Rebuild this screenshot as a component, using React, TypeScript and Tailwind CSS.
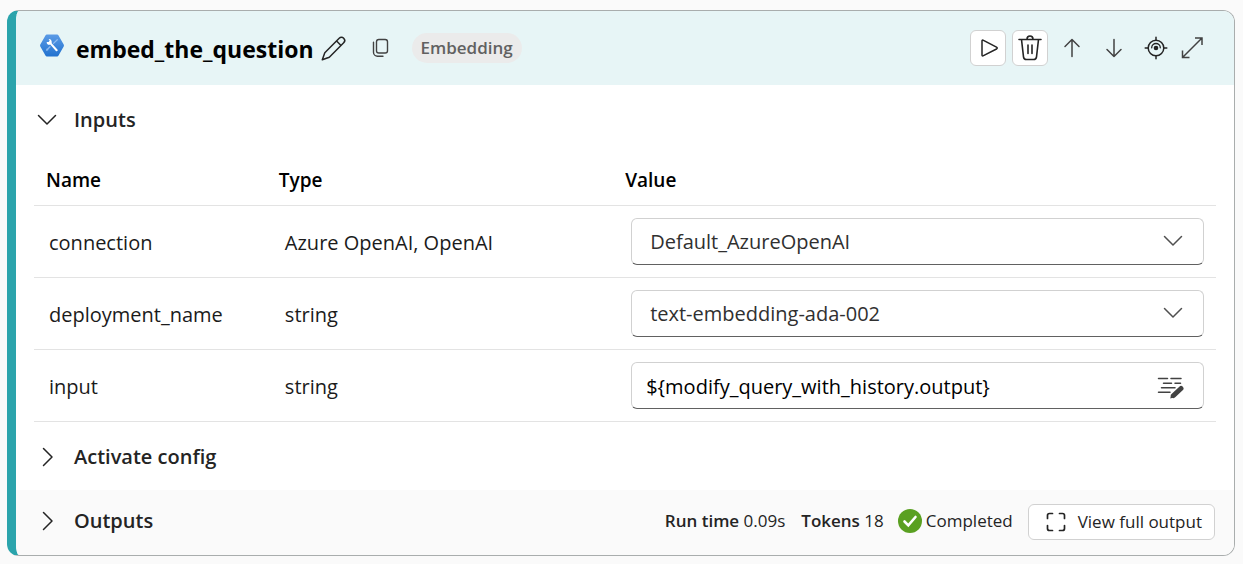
import type { ReactNode } from "react";

type IconProps = { size?: string; box?: string; width?: number; children: ReactNode };

function Icon({ size = "size-6", box = "0 0 24 24", width = 1.5, children }: IconProps) {
  return (
    <svg
      className={`${size} shrink-0`}
      viewBox={box}
      fill="none"
      stroke="currentColor"
      strokeWidth={width}
      strokeLinecap="round"
      strokeLinejoin="round"
      aria-hidden="true"
    >
      {children}
    </svg>
  );
}

const ChevronDown = () => (
  <Icon>
    <path d="M3.5 7.500 12 16 20.500 7.500" />
  </Icon>
);

const ChevronRight = () => (
  <Icon>
    <path d="M8.500 3.500 17 12 8.500 20.500" />
  </Icon>
);

function ToolLogo() {
  return (
    <svg className="mb-1 size-6 shrink-0" viewBox="0 0 24 24" aria-hidden="true">
      <defs>
        <linearGradient id="hex" x1="0" y1="0" x2="0" y2="1">
          <stop offset="0" stopColor="#5b9be6" />
          <stop offset="1" stopColor="#2272cf" />
        </linearGradient>
      </defs>
      <path
        d="M6.800 .5h10.400q.8 0 1.200.7l5.300 9.400q.5.900 0 1.800l-5.300 9.400q-.4.700-1.200.7H6.800q-.8 0-1.200-.7L.3 12.400q-.5-.9 0-1.800l5.300-9.400q.4-.7 1.200-.7z"
        fill="url(#hex)"
      />
      <path d="M17.300 5.700 13.500 9.400M10 12.800l-3.200 3.200" stroke="#8dbaf0" strokeWidth="1.300" strokeLinecap="round" />
      <path d="m6.800 14.200 1.900 1.900-2.400.6z" fill="#8dbaf0" />
      <path
        d="M8.600 4.900 9.700 6.500 8.700 8 6.700 7.900C6.500 10 8.300 11.300 10.200 10.600l5.700 6.300c1.100 1 2.400-.2 1.500-1.300l-5.700-6.300C12.200 6.600 10.800 4.700 8.600 4.900z"
        fill="#fff"
      />
    </svg>
  );
}

const headerCell = "px-3 pt-[2px] text-left font-semibold text-black";
const field =
  "h-[47px] w-full rounded-md border border-[#d1d1d1] border-b-[#616161] bg-white pt-[2px] outline-none";

function SelectField({ label, value }: { label: string; value: string }) {
  return (
    <div className="relative">
      <select
        aria-label={label}
        defaultValue={value}
        className={`${field} appearance-none pr-14 pl-[18px] text-[#303030]`}
      >
        <option>{value}</option>
      </select>
      <span className="pointer-events-none absolute inset-y-0 right-[19px] flex items-center text-[#505050]">
        <ChevronDown />
      </span>
    </div>
  );
}

function TextField({ label, value }: { label: string; value: string }) {
  return (
    <div className="relative">
      <input aria-label={label} defaultValue={value} className={`${field} pr-14 pl-[14px] text-black`} />
      <button
        type="button"
        aria-label="Edit value"
        className="absolute inset-y-0 right-[19px] flex items-center pt-1 text-[#424242]"
      >
        <Icon size="h-6 w-7" box="0 0 28 24" width={1.500}>
          <path d="M1.500 3.500h9M14 3.500h10M6.500 8.200h8M18 8.200h5.500M4.500 12.800h13.500M1.500 17.300h11.500" />
          <path d="M16.500 20.500 24 13.500" strokeWidth="5" />
          <path d="m14 19.200-.7 4.300 4.300-1.200z" fill="currentColor" stroke="none" />
        </Icon>
      </button>
    </div>
  );
}

const rows = [
  { name: "connection", type: "Azure OpenAI, OpenAI", value: "Default_AzureOpenAI", pick: true },
  { name: "deployment_name", type: "string", value: "text-embedding-ada-002", pick: true },
  { name: "input", type: "string", value: "${modify_query_with_history.output}", pick: false },
];

function Section({ title, open = false }: { title: string; open?: boolean }) {
  return (
    <button
      type="button"
      aria-expanded={open}
      className="flex items-center gap-[15px] text-xl font-semibold text-[#242424]"
    >
      {open ? <ChevronDown /> : <ChevronRight />}
      {title}
    </button>
  );
}

export default function App() {
  return (
    <main className="min-h-screen bg-[#fafafa] pt-[10px] pr-2 pb-2 pl-[7px] font-['Open_Sans','Noto_Sans',sans-serif] text-xl text-[#1b1b1b]">
      <article className="overflow-hidden rounded-xl border border-l-9 border-[#a9adad] border-l-[#2ba4ac] bg-white">
        <header className="flex h-[74px] items-center bg-[#e7f5f6] pr-[30px] pl-6">
          <ToolLogo />
          <h1 className="ml-3 pt-[2px] text-[23px] font-bold text-black">embed_the_question</h1>
          <button type="button" aria-label="Rename" className="ml-[6px] text-[#242424]">
            <Icon size="size-7" box="0 0 28 28">
              <path d="M19.200 4.300a3 3 0 0 1 4.500 4.500L9.300 23.200 2.300 25.800 4.800 18.700zM16.600 7l4.400 4.500" />
            </Icon>
          </button>
          <button type="button" aria-label="Copy" className="ml-5 text-[#424242]">
            <Icon width={1.400}>
              <rect x="8.500" y="3.500" width="11" height="13.500" rx="2.300" />
              <path d="M5.500 6.300v10a4 4 0 0 0 4 4h5.500" />
            </Icon>
          </button>
          <span className="ml-5 rounded-full bg-[#ebebeb] px-[9px] py-[3px] text-[17px] leading-6 font-semibold text-[#616161]">
            Embedding
          </span>
          <div className="ml-auto flex items-center gap-[6px] text-[#424242]">
            <button
              type="button"
              aria-label="Run"
              className="flex size-9 items-center justify-center rounded-md border border-[#d1d1d1] bg-white text-[#242424]"
            >
              <Icon>
                <path d="M6 5.100v13.800q0 1.600 1.500.8l13-6.700q1.500-.9 0-1.800l-13-6.900Q6 3.500 6 5.100z" />
              </Icon>
            </button>
            <button
              type="button"
              aria-label="Delete"
              className="flex size-9 items-center justify-center rounded-md border border-[#d1d1d1] bg-white text-[#242424]"
            >
              <Icon size="size-7" box="0 0 28 28" width={1.600}>
                <path d="M3 5.500h22M11 5.300q0-3.300 3-3.300t3 3.300M5.500 5.500l2 17.300q.3 2.700 3 2.700h7q2.700 0 3-2.700l2-17.300M12 11v8.500M16 11v8.500" />
              </Icon>
            </button>
            <button type="button" aria-label="Move up" className="flex w-9 justify-center">
              <Icon>
                <path d="M12 20.500V3.500M5 10.500l7-7 7 7" />
              </Icon>
            </button>
            <button type="button" aria-label="Move down" className="flex w-9 justify-center">
              <Icon>
                <path d="M12 3.500v17M5 13.500l7 7 7-7" />
              </Icon>
            </button>
            <button type="button" aria-label="Locate" className="flex w-9 justify-center text-[#242424]">
              <Icon>
                <circle cx="12" cy="12" r="7.800" />
                <circle cx="12" cy="12" r="2.300" fill="currentColor" stroke="none" />
                <path d="M12 1.200v3M12 19.800v3M1.200 12h3M19.800 12h3" />
                <path d="M7.700 11.800a4.300 4.300 0 0 1 8.600 0" strokeWidth="1.300" />
              </Icon>
            </button>
            <button type="button" aria-label="Expand" className="flex justify-center">
              <Icon>
                <path d="M3 21l18.500-18.500M15 2h7v7M2.500 14.500v7h7" strokeLinecap="butt" strokeLinejoin="miter" />
              </Icon>
            </button>
          </div>
        </header>

        <div className="flex h-[69px] items-center px-[19px]">
          <Section title="Inputs" open />
        </div>

        <div className="px-[18px]">
          <table className="w-full table-fixed border-collapse">
            <colgroup>
              <col className="w-[19.700%]" />
              <col className="w-[29.300%]" />
              <col />
            </colgroup>
            <thead>
              <tr className="h-[51px] border-b border-[#e3e3e3] text-[19px]">
                <th className={headerCell}>Name</th>
                <th className={headerCell}>Type</th>
                <th className={headerCell}>Value</th>
              </tr>
            </thead>
            <tbody>
              {rows.map((row) => (
                <tr key={row.name} className="h-[72px] border-b border-[#e3e3e3]">
                  <td className="pt-[3px] pl-[15px]">{row.name}</td>
                  <td className="pt-[3px] pl-[18px]">{row.type}</td>
                  <td className="pr-3 pl-[18px]">
                    {row.pick ? (
                      <SelectField label={row.name} value={row.value} />
                    ) : (
                      <TextField label={row.name} value={row.value} />
                    )}
                  </td>
                </tr>
              ))}
            </tbody>
          </table>
        </div>

        <div className="flex h-[68px] items-center px-[19px] pt-[2px]">
          <Section title="Activate config" />
        </div>

        <footer className="flex h-[65px] items-center bg-[#fafafa] px-[19px] pb-[3px] text-[#242424]">
          <Section title="Outputs" />
          <div className="ml-auto flex items-center text-[17px]">
            <p>
              <strong className="font-semibold">Run time</strong> 0.09s
            </p>
            <p className="ml-4">
              <strong className="font-semibold">Tokens</strong> 18
            </p>
            <p className="ml-[14px] flex items-center gap-1">
              <svg className="size-6" viewBox="0 0 24 24" aria-hidden="true">
                <circle cx="12" cy="12" r="12" fill="#5aa021" />
                <path
                  d="m6.500 12.500 3.800 3.800L17.500 8"
                  fill="none"
                  stroke="#fff"
                  strokeWidth="2.600"
                  strokeLinecap="round"
                />
              </svg>
              Completed
            </p>
            <button
              type="button"
              className="mt-[3px] ml-[15px] flex h-9 items-center gap-[10px] rounded-md border border-[#d1d1d1] bg-white pr-3 pl-[15px]"
            >
              <Icon width={1.700}>
                <path d="M3.500 8.500v-3q0-2 2-2h3M15.500 3.500h3q2 0 2 2v3M20.500 15.500v3q0 2-2 2h-3M8.500 20.500h-3q-2 0-2-2v-3" />
              </Icon>
              View full output
            </button>
          </div>
        </footer>
      </article>
    </main>
  );
}
